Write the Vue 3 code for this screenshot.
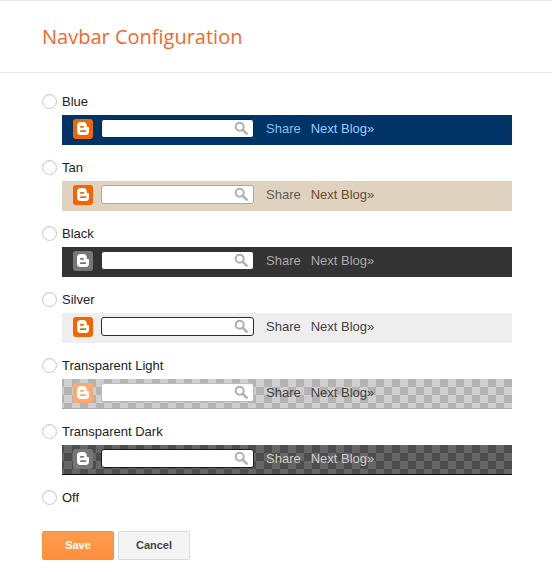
<script setup>
const themes = [
  { id: 'blue', label: 'Blue' },
  { id: 'tan', label: 'Tan' },
  { id: 'black', label: 'Black' },
  { id: 'silver', label: 'Silver' },
  { id: 'light', label: 'Transparent Light' },
  { id: 'dark', label: 'Transparent Dark' }
]
</script>

<template>
  <div class="dialog">
    <header class="head">
      <h1>Navbar Configuration</h1>
    </header>
    <div class="body">
      <div v-for="t in themes" :key="t.id" class="option">
        <label class="choice">
          <span class="radio"></span>
          <span>{{ t.label }}</span>
        </label>
        <div class="bar" :class="t.id">
          <span class="logo">
            <svg width="20" height="20" viewBox="0 0 20 20">
              <path class="b" fill-rule="evenodd" d="M7.5 3h3c2 0 3.2 1.4 3.2 3.1v1.2c0 .4.3.7.8.7h.5c.6 0 1 .4 1 1v3.7c0 2-1.3 3.3-3.3 3.3H7.5c-2 0-3.5-1.3-3.5-3.3V6.3C4 4.3 5.5 3 7.5 3zM7.8 7a.85.85 0 0 0 0 1.7h2.4a.85.85 0 0 0 0-1.7zM7.8 11.3a.85.85 0 0 0 0 1.7h4.6a.85.85 0 0 0 0-1.7z" />
            </svg>
          </span>
          <span class="search">
            <svg width="14" height="14" viewBox="0 0 14 14" fill="none" stroke="#b0b0b0">
              <circle cx="5.7" cy="5.7" r="4" stroke-width="2" />
              <path d="M8.8 8.8l3.8 3.8" stroke-width="2.6" stroke-linecap="round" />
            </svg>
          </span>
          <a class="share">Share</a>
          <a class="next">Next Blog»</a>
        </div>
      </div>
      <label class="choice">
        <span class="radio"></span>
        <span>Off</span>
      </label>
      <div class="actions">
        <button class="btn save">Save</button>
        <button class="btn cancel">Cancel</button>
      </div>
    </div>
  </div>
</template>

<style>
body {
  background: #fff;
}
</style>

<style scoped>
.dialog {
  width: 552px;
  height: 572px;
  box-sizing: border-box;
  border-top: 1px solid #e5e5e5;
  font-family: "Liberation Sans", Arial, sans-serif;
  font-size: 13px;
  color: #222;
  overflow: hidden;
}

.head {
  height: 72px;
  box-sizing: border-box;
  padding: 22px 42px 0;
  border-bottom: 1px solid #ebebeb;
}

.head h1 {
  margin: 0;
  font-family: "Open Sans", sans-serif;
  font-size: 20px;
  font-weight: 400;
  line-height: 28px;
  color: #f5682a;
}

.body {
  padding: 19px 40px 0 42px;
}

.option {
  height: 66px;
}

.choice {
  display: flex;
  align-items: center;
  height: 18px;
  gap: 5px;
}

.radio {
  width: 13px;
  height: 13px;
  border: 1px solid #c8c8c8;
  border-radius: 50%;
  background: #fff;
  box-shadow: inset 0 1px 1px #eee;
}

.bar {
  display: flex;
  align-items: flex-start;
  height: 30px;
  margin: 5px 0 0 20px;
  padding: 4px 0 0 11px;
  box-sizing: border-box;
  line-height: 20px;
}

.logo {
  display: flex;
  width: 20px;
  height: 20px;
  margin-right: 8px;
  border-radius: 3px;
  background: #f26500;
}

.logo .b {
  fill: #fff;
}

.search {
  display: flex;
  align-items: center;
  justify-content: flex-end;
  width: 153px;
  height: 19px;
  margin-right: 12px;
  padding: 0 5px 2px 0;
  box-sizing: border-box;
  background: #fff;
  border: 1px solid #002a55;
  border-radius: 3px;
}

.share {
  margin-right: 10px;
}

.blue {
  background: #003366;
}

.blue .share {
  color: #7cc0f5;
}

.blue .next {
  color: #99ccff;
}

.tan {
  background: #dfd3c0;
}

.tan .search {
  border-color: #b8a98f;
}

.tan .share {
  color: #5c5c5c;
}

.tan .next {
  color: #6b4a35;
}

.black {
  background: #333333;
}

.black .logo {
  background: #777;
}

.black .search {
  border-color: #333;
}

.black .share,
.black .next {
  color: #aaa;
}

.silver {
  background: #eeeeee;
}

.silver .search {
  border-color: #1c2b5a;
}

.silver .share,
.silver .next {
  color: #444;
}

.light {
  background: conic-gradient(#cfcfcf 25%, #b3b3b3 0 50%, #cfcfcf 0 75%, #b3b3b3 0) 10px 0 / 16px 16px;
  border-bottom: 1px solid #aaa;
}

.light .logo {
  background: #ffa86f;
}

.light .search {
  border-color: #bbb;
}

.light .share,
.light .next {
  color: #444;
}

.dark {
  background: conic-gradient(#666 25%, #4d4d4d 0 50%, #666 0 75%, #4d4d4d 0) 10px 0 / 16px 16px;
  border-bottom: 1px solid #111;
}

.dark .logo {
  background: #777;
}

.dark .search {
  border-color: #0c1a4a;
}

.dark .share,
.dark .next {
  color: #ccc;
}

.actions {
  display: flex;
  gap: 4px;
  margin-top: 25px;
}

.btn {
  width: 72px;
  height: 29px;
  padding: 0 0 2px;
  box-sizing: border-box;
  border-radius: 2px;
  font-family: "Liberation Sans", Arial, sans-serif;
  font-size: 11px;
  font-weight: 700;
}

.save {
  color: #fff;
  background: linear-gradient(#ff9d4d, #fe8f3c);
  border: 1px solid #f0953f;
}

.cancel {
  color: #444;
  background: #f4f4f4;
  border: 1px solid #dcdcdc;
}
</style>
